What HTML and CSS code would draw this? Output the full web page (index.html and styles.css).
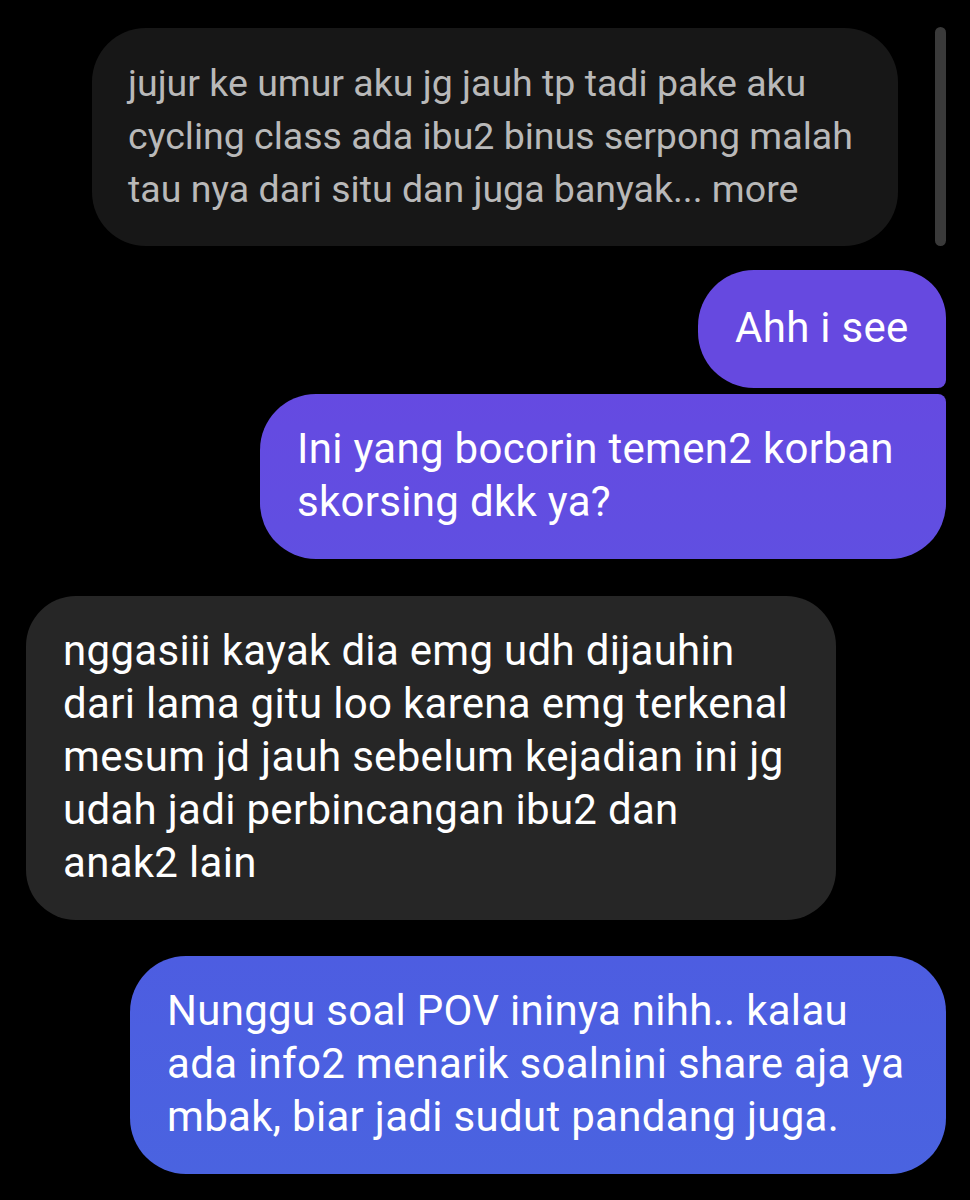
FILE: index.html
```html
<!DOCTYPE html>
<html lang="id">
<head>
<meta charset="utf-8">
<title>Chat</title>
<link rel="stylesheet" href="styles.css">
</head>
<body>
<div class="thread">
  <div class="scrollbar"></div>
  <div class="bubble received reply">
    <p>jujur ke umur aku jg jauh tp tadi pake aku<br>cycling class ada ibu2 binus serpong malah<br>tau nya dari situ dan juga banyak... more</p>
  </div>
  <div class="bubble sent first short">
    <p>Ahh i see</p>
  </div>
  <div class="bubble sent last mid">
    <p>Ini yang bocorin temen2 korban<br>skorsing dkk ya?</p>
  </div>
  <div class="bubble received main">
    <p>nggasiii kayak dia emg udh dijauhin<br>dari lama gitu loo karena emg terkenal<br>mesum jd jauh sebelum kejadian ini jg<br>udah jadi perbincangan ibu2 dan<br>anak2 lain</p>
  </div>
  <div class="bubble sent solo blue">
    <p>Nunggu soal POV ininya nihh.. kalau<br>ada info2 menarik soalnini share aja ya<br>mbak, biar jadi sudut pandang juga.</p>
  </div>
</div>
</body>
</html>
```

FILE: styles.css
```css
* { box-sizing: border-box; }
html, body {
  margin: 0;
  padding: 0;
  background: #000;
}
body {
  width: 970px;
  height: 1200px;
  overflow: hidden;
  font-family: Roboto, "Liberation Sans", sans-serif;
}
.thread {
  position: relative;
  display: flex;
  flex-direction: column;
  padding: 28px 24px 0 26px;
}
.scrollbar {
  position: absolute;
  top: 27px;
  left: 935px;
  width: 11px;
  height: 219px;
  border-radius: 6px;
  background: #3a3a3a;
}
.bubble {
  border-radius: 54px;
  padding: 28px 0 29px 37px;
}
.bubble p {
  margin: 0;
  font-size: 42px;
  line-height: 53px;
  letter-spacing: 0.3px;
  white-space: nowrap;
  color: #fff;
}
.received { align-self: flex-start; }
.sent { align-self: flex-end; }

.reply {
  margin-left: 66px;
  width: 806px;
  height: 218px;
  background: #171717;
  padding-left: 36px;
  padding-top: 29px;
}
.reply p {
  color: #b9b9b9;
  font-size: 37.5px;
  letter-spacing: 0;
}

.short {
  margin-top: 24px;
  width: 248px;
  min-height: 118px;
  display: flex;
  align-items: center;
  padding-top: 0;
  padding-bottom: 4px;
  background: #6649e0;
  border-radius: 56px 48px 8px 56px;
}
.mid {
  margin-top: 6px;
  width: 686px;
  height: 165px;
  background: linear-gradient(180deg, #654ae1, #604fe1);
  border-radius: 56px 8px 56px 56px;
}
.main {
  margin-top: 37px;
  width: 810px;
  height: 324px;
  background: #262626;
  border-radius: 50px;
}
.blue {
  margin-top: 36px;
  width: 816px;
  height: 218px;
  background: linear-gradient(180deg, #4d5de1, #4a63e0);
  border-radius: 56px;
}
```
